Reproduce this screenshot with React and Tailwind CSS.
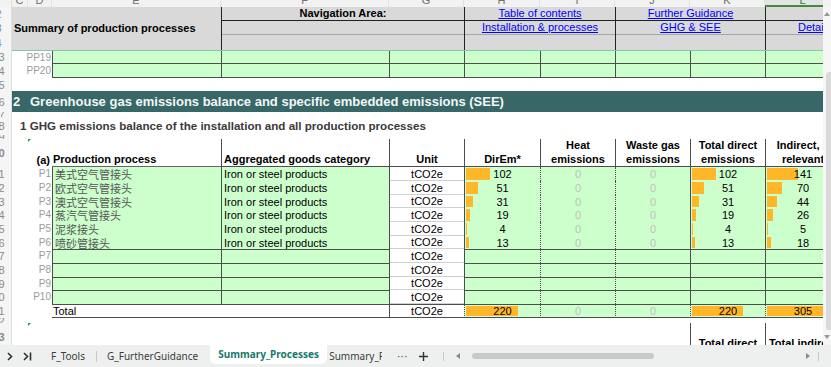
import React from 'react';

const processes = [
  { n: '31', p: 'P1', name: '美式空气管接头', dir: 102, ind: 141, h: 'h-[14px]' },
  { n: '32', p: 'P2', name: '欧式空气管接头', dir: 51, ind: 70, h: 'h-[14px]' },
  { n: '33', p: 'P3', name: '澳式空气管接头', dir: 31, ind: 44, h: 'h-[13px]' },
  { n: '34', p: 'P4', name: '蒸汽气管接头', dir: 19, ind: 26, h: 'h-[14px]' },
  { n: '35', p: 'P5', name: '泥浆接头', dir: 4, ind: 5, h: 'h-[14px]' },
  { n: '36', p: 'P6', name: '喷砂管接头', dir: 13, ind: 18, h: 'h-[13px]' },
  { n: '37', p: 'P7', h: 'h-[14px]' },
  { n: '38', p: 'P8', h: 'h-[14px]' },
  { n: '39', p: 'P9', h: 'h-[13px]' },
  { n: '40', p: 'P10', h: 'h-[14px]' },
];

const RowNum = ({ n, blue }) => (
  <div
    className={`w-[12px] shrink-0 flex justify-end items-center overflow-hidden bg-[#f5f5f5] border-r border-[#e0e0e0] ${
      blue ? 'text-[#6c93c8]' : 'text-[#8a8a8a]'
    }`}
  >
    <span className="w-[25px] shrink-0 text-center text-[11px] leading-[12px]">{n}</span>
  </div>
);

const BarCell = ({ value, scale, w = 'w-[75px]', extra = '' }) => (
  <div className={`relative shrink-0 ${w} bg-[#ccffcc] border-l border-[#4d4d4d] ${extra} flex items-center justify-center`}>
    {value != null && (
      <>
        <div
          className="absolute left-[1px] top-[1px] bottom-[1px] bg-[#ffb628]"
          style={{ width: Math.round(value * scale) }}
        />
        <span className="relative leading-[12px]">{value}</span>
      </>
    )}
  </div>
);

const ZeroCell = ({ show, extra = '' }) => (
  <div className={`shrink-0 w-[75px] bg-[#ccffcc] border-l [border-left-style:dotted] border-[#4d4d4d] ${extra} flex items-center justify-center text-[#c0c0c0] leading-[12px]`}>
    {show ? '0' : ''}
  </div>
);

const GreenMark = () => (
  <div className="absolute left-0 top-0 w-0 h-0 border-t-[3px] border-r-[3px] border-t-[#1f9d3f] border-r-transparent" />
);

export default function App() {
  return (
    <div className="w-[831px] h-[367px] overflow-hidden flex flex-col bg-white font-['Liberation_Sans',Arial,sans-serif] text-[11px] text-black">
      <div className="flex h-[345px]">
        <div className="w-[823px] overflow-hidden flex flex-col">
          {/* column letters */}
          <div className="flex h-[7px] shrink-0 overflow-hidden bg-[#f2f2f2] text-[#707070]">
            <div className="w-[12px] shrink-0 border-r border-[#e0e0e0]" />
            <div className="w-[16px] shrink-0 border-r border-[#e0e0e0] flex justify-center"><span className="-mt-[7px] leading-[14px]">C</span></div>
            <div className="w-[24px] shrink-0 border-r border-[#e0e0e0] flex justify-center"><span className="-mt-[7px] leading-[14px]">D</span></div>
            <div className="w-[169px] shrink-0 border-r border-[#e0e0e0] flex justify-center"><span className="-mt-[7px] leading-[14px]">E</span></div>
            <div className="w-[168px] shrink-0 border-r border-[#e0e0e0] flex justify-center"><span className="-mt-[7px] leading-[14px]">F</span></div>
            <div className="w-[75px] shrink-0 border-r border-[#e0e0e0] flex justify-center"><span className="-mt-[7px] leading-[14px]">G</span></div>
            <div className="w-[76px] shrink-0 border-r border-[#e0e0e0] flex justify-center"><span className="-mt-[7px] leading-[14px]">H</span></div>
            <div className="w-[75px] shrink-0 border-r border-[#e0e0e0] flex justify-center"><span className="-mt-[7px] leading-[14px]">I</span></div>
            <div className="w-[75px] shrink-0 border-r border-[#e0e0e0] flex justify-center"><span className="-mt-[7px] leading-[14px]">J</span></div>
            <div className="w-[75px] shrink-0 border-r border-[#e0e0e0] flex justify-center"><span className="-mt-[7px] leading-[14px]">K</span></div>
            <div className="w-[75px] shrink-0 bg-[#e4e4e4] border-b-2 border-[#3c8c3c] flex justify-center text-[#2f7d32]"><span className="-mt-[7px] leading-[14px]">L</span></div>
          </div>

          {/* frozen header rows */}
          <div className="flex h-[43px] shrink-0">
            <div className="w-[12px] shrink-0 flex flex-col">
              <div className="h-[14px] flex"><RowNum n="2" blue /></div>
              <div className="h-[14px] flex"><RowNum n="3" blue /></div>
              <div className="h-[15px] flex"><RowNum n="4" blue /></div>
            </div>
            <div className="w-[209px] shrink-0 bg-[#d9d9d9] flex items-center pl-[2px] font-bold whitespace-nowrap">
              Summary of production processes
            </div>
            <div className="w-[243px] shrink-0 bg-[#d9d9d9] border-l border-[#222] flex flex-col">
              <div className="h-[14px] border-b border-[#222] flex items-center justify-center font-bold">Navigation Area:</div>
              <div className="h-[14px] border-b border-[#a6a6a6]" />
              <div className="flex-1" />
            </div>
            <div className="w-[151px] shrink-0 bg-[#d9d9d9] border-l border-[#222] flex flex-col">
              <div className="h-[14px] border-b border-[#222] flex items-center justify-center text-[#0000ff] underline">Table of contents</div>
              <div className="h-[14px] border-b border-[#a6a6a6] flex items-center justify-center text-[#0000ff] underline">Installation &amp; processes</div>
              <div className="flex-1" />
            </div>
            <div className="w-[150px] shrink-0 bg-[#d9d9d9] border-l border-[#222] flex flex-col">
              <div className="h-[14px] border-b border-[#222] flex items-center justify-center text-[#0000ff] underline">Further Guidance</div>
              <div className="h-[14px] border-b border-[#a6a6a6] flex items-center justify-center text-[#0000ff] underline">GHG &amp; SEE</div>
              <div className="flex-1" />
            </div>
            <div className="w-[75px] shrink-0 bg-[#d9d9d9] border-l border-[#222] flex flex-col">
              <div className="h-[14px] border-b border-[#222]" />
              <div className="h-[14px] border-b border-[#a6a6a6] flex items-center pl-[32px] text-[#0000ff] underline whitespace-nowrap">Details</div>
              <div className="flex-1" />
            </div>
          </div>

          {/* PP19 / PP20 */}
          {['PP19', 'PP20'].map((pp, i) => (
            <div key={pp} className="flex h-[14px] shrink-0">
              <RowNum n={i === 0 ? '23' : '24'} />
              <div className={`flex ${i === 0 ? 'border-t border-[#7fcaa6]' : ''}`}>
                <div className="w-[16px] shrink-0" />
                <div className="w-[24px] shrink-0 flex items-center justify-end pr-[1px] text-[10px] text-[#9a9a9a] leading-[12px]">{pp}</div>
                <div className="w-[169px] shrink-0 bg-[#ccffcc] border-l border-b border-[#4d4d4d]" />
                <div className="w-[168px] shrink-0 bg-[#ccffcc] border-l border-b border-[#4d4d4d]" />
                <div className="w-[75px] shrink-0 bg-[#ccffcc] border-l border-b border-[#4d4d4d]" />
                <div className="w-[76px] shrink-0 bg-[#ccffcc] border-l border-b border-[#4d4d4d]" />
                <div className="w-[75px] shrink-0 bg-[#ccffcc] border-l border-b border-[#4d4d4d]" />
                <div className="w-[75px] shrink-0 bg-[#ccffcc] border-l border-b border-[#4d4d4d]" />
                <div className="w-[75px] shrink-0 bg-[#ccffcc] border-l border-b border-[#4d4d4d]" />
                <div className="w-[75px] shrink-0 bg-[#ccffcc] border-l border-b border-[#4d4d4d]" />
              </div>
            </div>
          ))}

          <div className="flex h-[13px] shrink-0"><RowNum n="25" /></div>

          {/* section banner */}
          <div className="flex h-[21px] shrink-0">
            <RowNum n="26" />
            <div className="flex-1 bg-[#386767] flex items-center text-[#f2f7f7] font-bold text-[13px] whitespace-nowrap">
              <span className="w-[18px] pl-[1px] shrink-0">2</span>
              <span>Greenhouse gas emissions balance and specific embedded emissions (SEE)</span>
            </div>
          </div>

          <div className="flex h-[5px] shrink-0"><RowNum n="27" /></div>

          <div className="flex h-[18px] shrink-0">
            <RowNum n="28" />
            <div className="flex items-center pl-[8px] font-bold text-[11.6px] text-[#3a3a3a] whitespace-nowrap">
              1 GHG emissions balance of the installation and all production processes
            </div>
          </div>

          <div className="flex h-[4px] shrink-0"><RowNum n="29" /></div>

          {/* table header */}
          <div className="flex h-[28px] shrink-0 font-bold leading-[14px]">
            <RowNum n="30" />
            <div className="w-[16px] shrink-0" />
            <div className="relative w-[24px] shrink-0 flex items-end justify-end pr-[2px]">
              <GreenMark />
              (a)
            </div>
            <div className="w-[169px] shrink-0 border-b border-[#666] flex items-end pl-[1px]">Production process</div>
            <div className="w-[168px] shrink-0 border-l border-b border-[#4d4d4d] flex items-end pl-[2px]">Aggregated goods category</div>
            <div className="w-[75px] shrink-0 border-l border-b border-[#4d4d4d] flex items-end justify-center">Unit</div>
            <div className="w-[76px] shrink-0 border-l border-b border-[#4d4d4d] flex items-end justify-center">DirEm*</div>
            <div className="w-[75px] shrink-0 border-l border-b border-[#4d4d4d] flex items-end justify-center text-center">Heat<br />emissions</div>
            <div className="w-[75px] shrink-0 border-l border-b border-[#4d4d4d] flex items-end justify-center text-center">Waste gas<br />emissions</div>
            <div className="w-[75px] shrink-0 border-l border-b border-[#4d4d4d] flex items-end justify-center text-center">Total direct<br />emissions</div>
            <div className="w-[75px] shrink-0 border-l border-b border-[#4d4d4d] flex items-end justify-center text-center whitespace-nowrap">Indirect, if<br />relevant</div>
          </div>

          {/* data rows */}
          {processes.map((r, i) => {
            const line = i >= 6 ? 'border-t' : '';
            return (
              <div key={r.p} className={`flex ${r.h} shrink-0`}>
                <RowNum n={r.n} />
                <div className="w-[16px] shrink-0" />
                <div className="w-[24px] shrink-0 flex items-center justify-end pr-[1px] text-[10px] text-[#9a9a9a] leading-[12px]">{r.p}</div>
                <div className={`w-[169px] shrink-0 bg-[#ccffcc] border-l border-[#4d4d4d] ${line} flex items-center pl-[2px] font-['Noto_Sans_CJK_SC',sans-serif] text-[#555] leading-[12px] whitespace-nowrap overflow-hidden`}>
                  {r.name}
                </div>
                <div className={`w-[168px] shrink-0 bg-[#ccffcc] border-l border-[#4d4d4d] ${line} flex items-center pl-[2px] leading-[12px]`}>
                  {r.name ? 'Iron or steel products' : ''}
                </div>
                <div className="w-[75px] shrink-0 border-l border-[#4d4d4d] flex items-center justify-center leading-[12px]">
                  <div className="w-full h-full border-b border-[#d0d0d0] flex items-center justify-center">tCO2e</div>
                </div>
                <BarCell value={r.dir} scale={0.236} w="w-[76px]" extra={line} />
                <ZeroCell show={r.name} extra={line} />
                <ZeroCell show={r.name} extra={line} />
                <BarCell value={r.dir} scale={0.232} extra={line} />
                <BarCell value={r.ind} scale={0.22} extra={line} />
              </div>
            );
          })}

          {/* total */}
          <div className="flex h-[14px] shrink-0">
            <RowNum n="41" />
            <div className="w-[16px] shrink-0" />
            <div className="w-[24px] shrink-0" />
            <div className="w-[337px] shrink-0 border-t border-b border-[#4d4d4d] flex items-center pl-[1px] leading-[12px]">Total</div>
            <div className="w-[75px] shrink-0 border-l border-t border-b border-[#4d4d4d] flex items-center justify-center leading-[12px]">tCO2e</div>
            <BarCell value={220} scale={0.236} w="w-[76px]" extra="border-t border-b [border-left-style:dotted]" />
            <ZeroCell show extra="border-t border-b" />
            <ZeroCell show extra="border-t border-b" />
            <BarCell value={220} scale={0.232} extra="border-t border-b [border-left-style:dotted]" />
            <BarCell value={305} scale={0.22} extra="border-t border-b [border-left-style:dotted]" />
          </div>

          <div className="flex h-[5px] shrink-0"><RowNum n="42" /></div>

          <div className="flex h-[28px] shrink-0 font-bold leading-[14px]">
            <RowNum n="43" />
            <div className="w-[16px] shrink-0" />
            <div className="relative w-[24px] shrink-0"><GreenMark /></div>
            <div className="w-[169px] shrink-0" />
            <div className="w-[168px] shrink-0" />
            <div className="w-[75px] shrink-0" />
            <div className="w-[76px] shrink-0" />
            <div className="w-[75px] shrink-0" />
            <div className="w-[75px] shrink-0" />
            <div className="w-[75px] shrink-0 border-l border-[#4d4d4d] pt-[13px] text-center whitespace-nowrap">Total direct</div>
            <div className="w-[75px] shrink-0 border-l border-[#4d4d4d] pt-[13px] text-center whitespace-nowrap">Total indirect</div>
          </div>
        </div>

        {/* vertical scrollbar */}
        <div className="w-[8px] shrink-0 bg-[#f6f6f6] flex flex-col items-center">
          <div className="h-[7px] w-full bg-[#f2f2f2]" />
          <svg className="mt-[5px]" width="6" height="4" viewBox="0 0 6 4">
            <path d="M0 4 L3 0 L6 4 Z" fill="#9a9a9a" />
          </svg>
          <div className="mt-[56px] ml-[3px] w-[5px] h-[258px] rounded-l-[3px] bg-[#dadada]" />
          <svg className="mt-[5px]" width="6" height="4" viewBox="0 0 6 4">
            <path d="M0 0 L3 4 L6 0 Z" fill="#9a9a9a" />
          </svg>
        </div>
      </div>

      {/* sheet tabs */}
      <div className="h-[22px] shrink-0 flex items-center bg-[#edf0ef] font-['Noto_Sans',sans-serif] text-[10px] text-[#3c3c3c] whitespace-nowrap">
        <svg className="ml-[7px] shrink-0" width="6" height="9" viewBox="0 0 6 9">
          <path d="M1 1 L4.5 4.5 L1 8" stroke="#333" strokeWidth="1.6" fill="none" />
        </svg>
        <svg className="ml-[10px] shrink-0" width="9" height="9" viewBox="0 0 9 9">
          <path d="M1 1 L4.5 4.5 L1 8" stroke="#333" strokeWidth="1.6" fill="none" />
          <path d="M7.5 0.5 L7.5 8.5" stroke="#333" strokeWidth="1.6" />
        </svg>
        <span className="ml-[19px] shrink-0">F_Tools</span>
        <div className="ml-[11px] w-px h-[11px] bg-[#c9c9c9] shrink-0" />
        <span className="ml-[10px] shrink-0">G_FurtherGuidance</span>
        <div className="ml-[12px] w-[117px] self-start h-[19px] shrink-0 bg-white rounded-b-[6px] flex items-center justify-center font-bold text-[#17796b]">
          Summary_Processes
        </div>
        <div className="ml-[2px] w-[53px] shrink-0 overflow-hidden">Summary_Processes</div>
        <span className="ml-[15px] shrink-0 tracking-[1px] text-[#555]">···</span>
        <svg className="ml-[11px] shrink-0" width="9" height="9" viewBox="0 0 9 9">
          <path d="M4.5 0 V9 M0 4.5 H9" stroke="#333" strokeWidth="1.4" />
        </svg>
        <div className="ml-[15px] w-px h-[9px] bg-[#c9c9c9] shrink-0" />
        <svg className="ml-[12px] shrink-0" width="4" height="6" viewBox="0 0 4 6">
          <path d="M4 0 L0 3 L4 6 Z" fill="#8a8a8a" />
        </svg>
        <div className="ml-[12px] w-[182px] h-[6px] rounded-full bg-[#c9c9c9] shrink-0" />
        <div className="flex-1" />
        <svg className="shrink-0" width="4" height="6" viewBox="0 0 4 6">
          <path d="M0 0 L4 3 L0 6 Z" fill="#8a8a8a" />
        </svg>
        <div className="ml-[8px] mr-[12px] w-px h-[9px] bg-[#c9c9c9] shrink-0" />
      </div>
    </div>
  );
}
